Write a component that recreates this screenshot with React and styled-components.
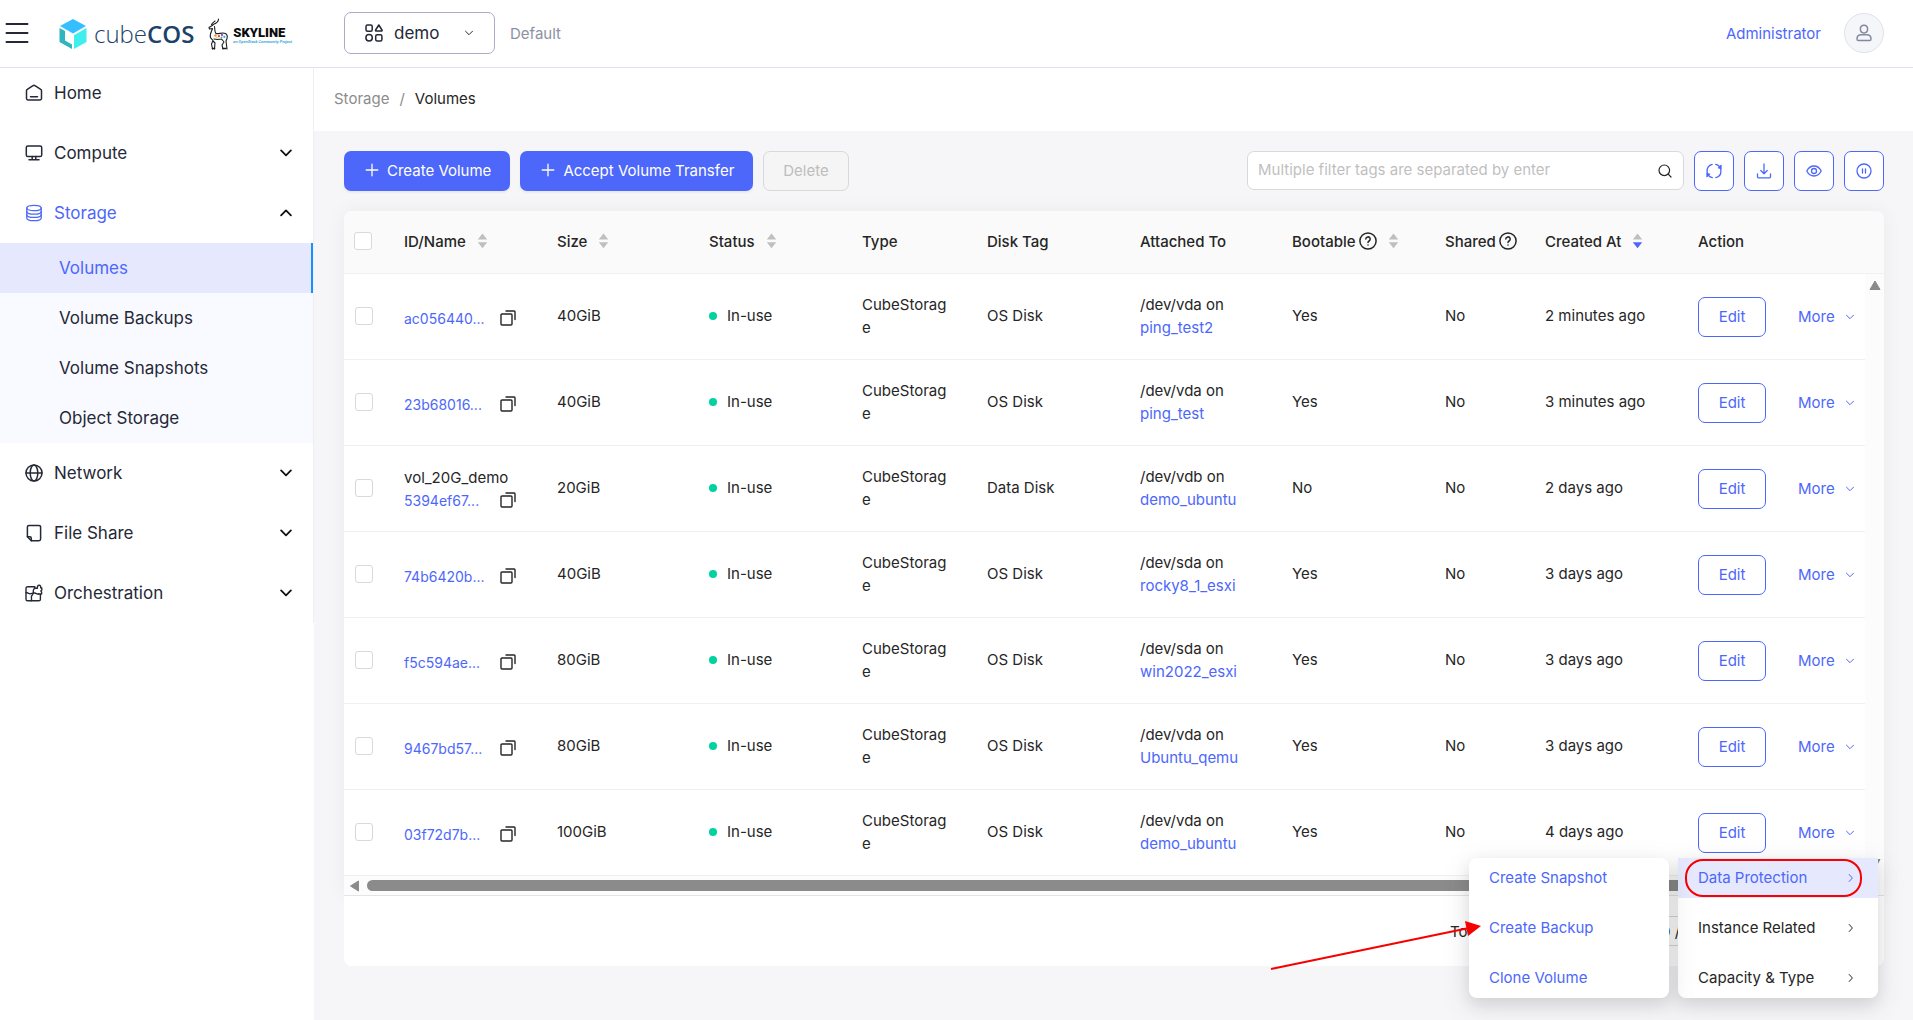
import React from "react";
import styled, { createGlobalStyle, css } from "styled-components";

const color = {
  primary: "#4d67fb",
  text: "#262626",
  nav: "#252836",
  muted: "#8b91a3",
  line: "#f0f0f0",
  headerLine: "#dfe1ed",
  page: "#f6f6f9",
  scroll: "#8b8b8b",
};

const GlobalStyle = createGlobalStyle`
  *, *::before, *::after { box-sizing: border-box; }
  body {
    margin: 0;
    background: #fff;
    color: ${color.text};
    font-family: Inter, "Liberation Sans", sans-serif;
    font-size: 15px;
    line-height: 23px;
  }
  button, input { font: inherit; color: inherit; }
  a { color: ${color.primary}; text-decoration: none; }
`;

/* ---------- shell ---------- */

const Page = styled.div`
  min-height: 100vh;
  display: flex;
  flex-direction: column;
`;

const Header = styled.header`
  height: 68px;
  flex: none;
  display: flex;
  align-items: center;
  padding: 0 29px 1px 5px;
  background: #fff;
  border-bottom: 1px solid ${color.headerLine};
`;

const PlainButton = styled.button`
  display: inline-flex;
  align-items: center;
  justify-content: center;
  padding: 0;
  border: 0;
  background: none;
  cursor: pointer;
`;

const Brand = styled.a`
  width: 285px;
  margin-left: 30px;
  padding-top: 2px;
  display: flex;
  align-items: center;
  color: #1a426a;
`;

const BrandText = styled.span`
  margin: 0 14px 0 7px;
  font-family: "Open Sans", "Noto Sans", sans-serif;
  font-size: 24px;
  line-height: 32px;
  font-weight: 300;
`;

const BrandStrong = styled.strong`
  font-weight: 600;
`;

const Skyline = styled.span`
  display: flex;
  flex-direction: column;
  margin-left: 4px;
  padding-top: 4px;
  font-family: Roboto, sans-serif;
`;

const SkylineName = styled.strong`
  font-size: 13px;
  line-height: 12px;
  font-weight: 900;
  color: #0b0b0d;
`;

const SkylineTag = styled.em`
  font-size: 4px;
  line-height: 6px;
  font-weight: 700;
  color: #3fa9d9;
  white-space: nowrap;
`;

const ProjectButton = styled(PlainButton)`
  width: 151px;
  height: 42px;
  padding: 0 20px;
  justify-content: flex-start;
  gap: 11px;
  border: 1px solid #a9aec6;
  border-radius: 7px;
  color: ${color.nav};
  font-size: 17px;
`;

const Pushed = styled.span`
  margin-left: auto;
  display: inline-flex;
`;

const Domain = styled.span`
  margin-left: 15px;
  color: ${color.muted};
`;

const UserArea = styled.div`
  margin-left: auto;
  display: flex;
  align-items: center;
  gap: 23px;
`;

const Avatar = styled(PlainButton)`
  width: 40px;
  height: 40px;
  border: 1px solid #dfe1ec;
  border-radius: 50%;
  background: #f5f6fa;
  color: #8489a0;
`;

const Body = styled.div`
  flex: 1;
  display: flex;
  align-items: stretch;
`;

const Sidebar = styled.aside`
  width: 314px;
  flex: none;
  background: #fff;
`;

const Nav = styled.nav`
  display: flex;
  flex-direction: column;
  border-right: 1px solid #eeeef3;
`;

const NavItem = styled.button`
  height: 50px;
  margin: 5px 0;
  padding: 0 20px 0 25px;
  display: flex;
  align-items: center;
  gap: 11px;
  border: 0;
  background: none;
  color: ${(p) => (p.$active ? color.primary : color.nav)};
  font-size: 17px;
  cursor: pointer;
  &:first-child { margin-top: 0; }
`;

const NavArrow = styled(Pushed)`
  color: #111;
`;

const SubNav = styled.div`
  display: flex;
  flex-direction: column;
  background: #f9faff;
`;

const SubLink = styled.a`
  height: 50px;
  padding-left: 59px;
  display: flex;
  align-items: center;
  font-size: 17px;
  color: ${color.nav};
  ${(p) =>
    p.$active &&
    css`
      color: ${color.primary};
      background: #e6e9fe;
      border-right: 2px solid #1890ff;
    `}
`;

const Main = styled.main`
  flex: 1;
  min-width: 0;
  background: ${color.page};
`;

const Breadcrumb = styled.nav`
  height: 63px;
  padding: 0 20px 2px;
  display: flex;
  align-items: center;
  gap: 10px;
  background: #fff;
  color: #8c8c8c;
`;

const Crumb = styled.a`
  color: ${(p) => (p.$current ? color.text : "#8c8c8c")};
`;

const Content = styled.div`
  padding: 20px 29px 20px 30px;
`;

/* ---------- toolbar ---------- */

const Toolbar = styled.div`
  display: flex;
  gap: 10px;
  margin-bottom: 20px;
`;

const ActionButton = styled(PlainButton)`
  height: 40px;
  padding: 0 19px 2px;
  gap: 8px;
  border-radius: 7px;
  white-space: nowrap;
  ${(p) =>
    p.$kind === "primary"
      ? css`
          padding: 0 19px 2px 21px;
          background: ${color.primary};
          color: #fff;
          box-shadow: 0 2px 2px rgba(0, 0, 0, 0.05);
        `
      : css`
          border: 1px solid #d9d9d9;
          background: #f5f5f5;
          color: #bdbdbd;
          cursor: not-allowed;
        `}
`;

const SearchBox = styled.label`
  width: 437px;
  height: 39px;
  margin-left: auto;
  padding: 0 11px 0 10px;
  display: flex;
  align-items: center;
  background: #fff;
  border: 1px solid #d9d9d9;
  border-radius: 7px;
`;

const SearchInput = styled.input`
  flex: 1;
  min-width: 0;
  padding: 0 0 2px;
  border: 0;
  outline: 0;
  background: none;
  &::placeholder { color: #bfbfbf; opacity: 1; }
`;

const IconButton = styled(PlainButton)`
  width: 40px;
  height: 40px;
  border: 1px solid ${color.primary};
  border-radius: 7px;
  background: #fff;
  color: ${color.primary};
`;

/* ---------- table ---------- */

const Card = styled.section`
  border-radius: 8px;
  background: #fff;
`;

const TableArea = styled.div`
  border-radius: 8px 8px 0 0;
  box-shadow: 0 0 20px rgba(0, 0, 0, 0.05);
`;

const Table = styled.table`
  width: 100%;
  table-layout: fixed;
  border-collapse: separate;
  border-spacing: 0;
`;

const Col = styled.col`
  width: ${(p) => (p.$w ? `${p.$w}px` : "auto")};
`;

const Th = styled.th`
  height: 63px;
  padding: ${(p) => (p.$check ? "0 10px 2px" : "0 16px 2px")};
  text-align: left;
  font-weight: 500;
  white-space: nowrap;
  background: #fafafa;
  border-bottom: 1px solid ${color.line};
  &:first-child { border-top-left-radius: 8px; }
  &:last-child { border-top-right-radius: 8px; }
`;

const HeadLabel = styled.div`
  display: flex;
  align-items: center;
  gap: ${(p) => (p.$tight ? 3 : 11)}px;
`;

const Td = styled.td`
  height: 86px;
  padding: ${(p) => (p.$check ? "0 11px 2px" : p.$center ? "0 16px" : "0 16px 2px")};
  vertical-align: middle;
  overflow-wrap: anywhere;
  border-bottom: 1px solid ${color.line};
`;

const Gutter = styled.td`
  padding: 6px 4px;
  vertical-align: ${(p) => p.$align};
  line-height: 0;
  color: ${color.scroll};
  background: #fcfcfc;
`;

const Check = styled.input`
  appearance: none;
  display: block;
  width: 18px;
  height: 18px;
  margin: 0;
  border: 1px solid #d9d9d9;
  border-radius: 3px;
  background: #fff;
`;

const IdLine = styled.div`
  display: flex;
  align-items: center;
  justify-content: space-between;
  width: 112px;
  padding-top: ${(p) => (p.$named ? 0 : 3)}px;
  font-size: 14px;
`;

const Status = styled.span`
  display: inline-flex;
  align-items: center;
  gap: 10px;
  vertical-align: top;
  &::before {
    content: "";
    width: 8px;
    height: 8px;
    border-radius: 50%;
    background: #00d39f;
  }
`;

const Attached = styled.div`
  display: flex;
  flex-direction: column;
`;

const Actions = styled.div`
  display: flex;
  align-items: center;
  gap: 32px;
`;

const EditButton = styled(PlainButton)`
  width: 68px;
  height: 40px;
  flex: none;
  border: 1px solid ${color.primary};
  border-radius: 7px;
  background: #fff;
  color: ${color.primary};
`;

const MoreWrap = styled.div`
  position: relative;
  flex: none;
`;

const MoreButton = styled(PlainButton)`
  height: 40px;
  gap: 10px;
  color: ${color.primary};
  white-space: nowrap;
`;

const ScrollTrack = styled.div`
  height: 19px;
  padding: 0 26px 0 5px;
  display: flex;
  align-items: center;
  gap: 6px;
  background: #fcfcfc;
  color: ${color.scroll};
`;

const ScrollThumb = styled.div`
  flex: 1;
  height: 11px;
  border-radius: 6px;
  background: ${color.scroll};
`;

const Pager = styled.footer`
  height: 71px;
  padding: 0 132px 0 0;
  display: flex;
  align-items: center;
  justify-content: flex-end;
  gap: 16px;
  background: #fff;
  border-top: 1px solid #e3e4ea;
  border-radius: 0 0 8px 8px;
`;

const PagerTotal = styled.span`
  min-width: 90px;
`;

const PagerCell = styled(PlainButton)`
  width: 28px;
  height: 30px;
  border-radius: 4px;
  color: #bfbfbf;
`;

const PageSize = styled.select`
  width: 108px;
  height: 30px;
  padding: 0 10px;
  appearance: none;
  border: 1px solid #d9d9d9;
  border-radius: 4px;
  background: #fff;
  color: ${color.text};
  font: inherit;
`;

/* ---------- menus ---------- */

const Menu = styled.div`
  position: absolute;
  z-index: 5;
  width: 200px;
  height: 140px;
  display: flex;
  flex-direction: column;
  gap: 10px;
  background: #fff;
  border-radius: 8px;
  box-shadow: 0 6px 16px rgba(0, 0, 0, 0.1), 0 8px 28px 6px rgba(0, 0, 0, 0.06);
`;

const MainMenu = styled(Menu)`
  top: 45px;
  left: -120px;
`;

const SideMenu = styled(Menu)`
  top: 0;
  right: 209px;
`;

const MenuItem = styled.button`
  height: 40px;
  padding: 0 22px 0 20px;
  display: flex;
  align-items: center;
  justify-content: space-between;
  border: 0;
  background: ${(p) => (p.$active ? "#e6e9fd" : "none")};
  color: ${(p) => (p.$link || p.$active ? color.primary : color.text)};
  white-space: nowrap;
  cursor: pointer;
`;

const Highlight = styled.span`
  position: absolute;
  top: 1px;
  left: 7px;
  width: 177px;
  height: 38px;
  border: 2px solid #f60000;
  border-radius: 18px;
  pointer-events: none;
`;

const Pointer = styled.svg`
  position: absolute;
  top: 60px;
  left: -200px;
  pointer-events: none;
`;

/* ---------- drawings ---------- */

const Svg = ({ size = 18, w = 1.5, box = 18, children }) => (
  <svg
    width={size}
    height={size}
    viewBox={`0 0 ${box} ${box}`}
    fill="none"
    stroke="currentColor"
    strokeWidth={w}
    strokeLinecap="round"
    strokeLinejoin="round"
    aria-hidden="true"
  >
    {children}
  </svg>
);

const Chevron = ({ dir = "down", size = 10, w = 1 }) => {
  const d = {
    down: "M1.5 3.2 5 6.7 8.5 3.2",
    up: "M1.5 6.7 5 3.2 8.5 6.7",
    right: "M3.2 1.5 6.4 5 3.2 8.5",
    left: "M6.4 1.5 3.2 5 6.4 8.5",
  }[dir];
  return (
    <Svg size={size} box={10} w={w}>
      <path d={d} />
    </Svg>
  );
};

const Plus = () => (
  <Svg size={14} box={14} w={1.3}>
    <path d="M7 1.2v11.6M1.2 7h11.6" />
  </Svg>
);

const Triangle = ({ dir }) => {
  const d = {
    up: "M6 1 11 9.5H1z",
    down: "M1 1.5h10L6 10z",
    left: "M1.5 6 9.5 1v10z",
  }[dir];
  return (
    <svg width="12" height="12" viewBox="0 0 12 12" fill="currentColor" stroke="currentColor" strokeLinejoin="round" aria-hidden="true">
      <path d={d} />
    </svg>
  );
};

const Sorter = ({ desc }) => (
  <svg width="11" height="16" viewBox="0 0 11 16" aria-hidden="true">
    <path d="M5.500 0.500 10.200 6.500H.8z" fill="#bfbfbf" />
    <path d="M.8 9.200h9.400L5.500 15.200z" fill={desc ? color.primary : "#bfbfbf"} />
  </svg>
);

const Help = () => (
  <Svg size={18}>
    <circle cx="9" cy="9" r="8.100" />
    <path d="M6.800 7.100a2.200 2.200 0 1 1 3.300 1.900c-.8.5-1.100.8-1.100 1.600" />
    <path d="M9 13v.1" />
  </Svg>
);

const CopyIcon = () => (
  <Svg size={16} box={16} w={1.4}>
    <rect x="1" y="4" width="11" height="11" rx="1" />
    <path d="M6 1h8.200a.8.8 0 0 1 .8.8V9.500" />
  </Svg>
);

const navIcons = {
  home: (
    <Svg>
      <path d="M1.500 6.600c0-.6.3-1 .8-1.300L8 1.700c.6-.4 1.400-.4 2 0l5.700 3.600c.5.3.8.7.8 1.300V14.600c0 .8-.6 1.400-1.400 1.400H2.900c-.8 0-1.400-.6-1.400-1.400z" />
      <path d="M5.500 12.800h7" />
    </Svg>
  ),
  compute: (
    <Svg>
      <rect x="1.300" y="2" width="15.400" height="10.500" rx="1.600" />
      <path d="M7.200 12.500v3M10.800 12.500v3M4 15.800h10" />
    </Svg>
  ),
  storage: (
    <Svg w={1.3}>
      <ellipse cx="9" cy="4" rx="7.200" ry="2.700" />
      <path d="M1.800 4v10c0 1.500 3.200 2.700 7.200 2.700s7.200-1.200 7.200-2.700V4" />
      <path d="M1.800 7.400c0 1.500 3.200 2.700 7.200 2.700s7.200-1.200 7.200-2.700M1.800 10.700c0 1.500 3.200 2.700 7.200 2.700s7.200-1.200 7.200-2.700" />
    </Svg>
  ),
  network: (
    <Svg>
      <circle cx="9" cy="9" r="8" />
      <ellipse cx="9" cy="9" rx="3.800" ry="8" />
      <path d="M1 9h16" />
    </Svg>
  ),
  file: (
    <Svg>
      <path d="M6.300 16.700H14c.9 0 1.600-.7 1.600-1.600V3c0-.9-.7-1.600-1.600-1.600H4C3.100 1.400 2.400 2.100 2.400 3v9.800z" />
      <path d="M2.400 12.800h2.500c.8 0 1.400.6 1.400 1.400v2.500" />
    </Svg>
  ),
  orchestration: (
    <Svg w={1.4}>
      <path d="M9.500 2.800H2.600c-.9 0-1.600.7-1.600 1.600v10.800c0 .9.7 1.600 1.600 1.600h11.200c.9 0 1.600-.7 1.600-1.600V10.500" />
      <path d="M1 8.500c1.800 0 2.500 1.400 4.200 1.300 1.600-.1 2.300-1 4.300-.8 1.800.2 2.600 1.200 4.300 1" />
      <path d="M9.800 2.800c.3 1.600-1.400 2.400-1.500 4 0 1.600.4 2.400-.6 3.600-1 1-1.800 1.600-1.300 3.200.3 1 .2 2.200-.2 3.200" />
      <path d="M9.800 4.200h2.600c-.3-1.600.4-3 1.700-3s2 1.300 1.500 2.700h1.200v2.200c-1 .2-1.200 1.400-.2 1.900v2h-2.800" />
    </Svg>
  ),
};

const ProjectIcon = () => (
  <Svg size={18}>
    <rect x="1" y="1" width="6.200" height="6.200" rx="1.500" />
    <path d="M13.800 1 17 6c.2.600-.1 1.100-.7 1.100h-5c-.6 0-.9-.5-.7-1.100z" />
    <circle cx="4.100" cy="13.800" r="3.200" />
    <rect x="10.700" y="10.700" width="6.200" height="6.200" rx="1.500" />
  </Svg>
);

const CubeLogo = () => (
  <svg width="28" height="32" viewBox="0 0 28 32" aria-hidden="true">
    <path d="M14 1 27 8 14 15.500 1 8z" fill="#35bfff" />
    <path d="M.5 10 6 13v9.500l7 4V31L.5 24z" fill="#2fb5bd" />
    <path d="M27.500 10v14L15 31V17.200z" fill="#40eeee" />
  </svg>
);

const DeerLogo = () => (
  <svg width="21" height="32" viewBox="0 0 21 32" fill="none" stroke="#1d1d1f" strokeWidth="1.100" strokeLinecap="round" strokeLinejoin="round" aria-hidden="true">
    <path d="M5 6.500C8 5.500 10.500 4 10.500 1M3.500 6.500C4.500 4.500 6.500 3.800 7 3" />
    <path d="M5 7 1 9.500l.5 1.500 3-.5c-.8 3-3.200 6-2 9 .6 1.600 2 2 2.500 3L3.500 26l1 5M5 23l2 2-.5 6M6.500 8.500c.5 3 0 5.500 1.500 7 3 .8 6-1.500 9.500 0 1.500.8 2 3 1.500 5l-1 2.500 1 8M13.500 21l2.500 3-2 3 1 4M6 21c2.500.8 5 .5 7.500 0" />
    <path d="M4.500 30.500h2M15 30.500h3" strokeWidth="1.600" />
    <g stroke="none">
      <circle cx="7.500" cy="17.500" r="1.200" fill="#f28a2e" />
      <circle cx="11" cy="18.200" r="1.100" fill="#e23b4b" />
      <circle cx="14" cy="16.900" r="1.100" fill="#8a3fd1" />
      <circle cx="16.300" cy="18.800" r="1.100" fill="#29a6e0" />
      <circle cx="9" cy="19.600" r=".9" fill="#f6cf33" />
      <circle cx="13.500" cy="19.500" r=".9" fill="#3bbf6a" />
    </g>
  </svg>
);

/* ---------- data ---------- */

const nav = [
  { label: "Home", icon: "home" },
  { label: "Compute", icon: "compute", arrow: "down" },
  {
    label: "Storage",
    icon: "storage",
    arrow: "up",
    children: ["Volumes", "Volume Backups", "Volume Snapshots", "Object Storage"],
  },
  { label: "Network", icon: "network", arrow: "down" },
  { label: "File Share", icon: "file", arrow: "down" },
  { label: "Orchestration", icon: "orchestration", arrow: "down" },
];

const columns = [
  { label: "ID/Name", w: 153, sort: true },
  { label: "Size", w: 152, sort: true },
  { label: "Status", w: 153, sort: true },
  { label: "Type", w: 125 },
  { label: "Disk Tag", w: 153 },
  { label: "Attached To", w: 152 },
  { label: "Bootable", w: 153, help: true, sort: true },
  { label: "Shared", w: 100, help: true },
  { label: "Created At", w: 153, sort: true, desc: true },
  { label: "Action" },
];

const rows = [
  { id: "ac056440...", size: "40GiB", tag: "OS Disk", dev: "/dev/vda", host: "ping_test2", boot: "Yes", at: "2 minutes ago" },
  { id: "23b68016...", size: "40GiB", tag: "OS Disk", dev: "/dev/vda", host: "ping_test", boot: "Yes", at: "3 minutes ago" },
  { id: "5394ef67...", name: "vol_20G_demo", size: "20GiB", tag: "Data Disk", dev: "/dev/vdb", host: "demo_ubuntu", boot: "No", at: "2 days ago" },
  { id: "74b6420b...", size: "40GiB", tag: "OS Disk", dev: "/dev/sda", host: "rocky8_1_esxi", boot: "Yes", at: "3 days ago" },
  { id: "f5c594ae...", size: "80GiB", tag: "OS Disk", dev: "/dev/sda", host: "win2022_esxi", boot: "Yes", at: "3 days ago" },
  { id: "9467bd57...", size: "80GiB", tag: "OS Disk", dev: "/dev/vda", host: "Ubuntu_qemu", boot: "Yes", at: "3 days ago" },
  { id: "03f72d7b...", size: "100GiB", tag: "OS Disk", dev: "/dev/vda", host: "demo_ubuntu", boot: "Yes", at: "4 days ago" },
];

/* ---------- parts ---------- */

const RowMenu = () => (
  <MainMenu>
    <MenuItem $active>
      Data Protection
      <Chevron dir="right" />
    </MenuItem>
    <MenuItem>
      Instance Related
      <Chevron dir="right" />
    </MenuItem>
    <MenuItem>
      Capacity &amp; Type
      <Chevron dir="right" />
    </MenuItem>
    <Highlight />
    <SideMenu>
      <MenuItem $link>Create Snapshot</MenuItem>
      <MenuItem $link>Create Backup</MenuItem>
      <MenuItem $link>Clone Volume</MenuItem>
      <Pointer width="214" height="56" viewBox="0 0 214 56" aria-hidden="true">
        <path d="M2 51 200 10" stroke="#f60000" strokeWidth="2" />
        <path d="M196 3 212 8 199 18z" fill="#f60000" />
      </Pointer>
    </SideMenu>
  </MainMenu>
);

const VolumeTable = () => (
  <Table>
    <colgroup>
      <Col $w={44} />
      {columns.map((c) => (
        <Col key={c.label} $w={c.w} />
      ))}
      <Col $w={19} />
    </colgroup>
    <thead>
      <tr>
        <Th $check>
          <Check type="checkbox" aria-label="Select all" />
        </Th>
        {columns.map((c) => (
          <Th key={c.label} colSpan={c.label === "Action" ? 2 : 1}>
            <HeadLabel>
              <HeadLabel $tight>
                {c.label}
                {c.help && <Help />}
              </HeadLabel>
              {c.sort && <Sorter desc={c.desc} />}
            </HeadLabel>
          </Th>
        ))}
      </tr>
    </thead>
    <tbody>
      {rows.map((r, i) => (
        <tr key={r.id}>
          <Td $check>
            <Check type="checkbox" aria-label={`Select ${r.id}`} />
          </Td>
          <Td $center>
            {r.name}
            <IdLine $named={!!r.name}>
              <a href="#volume">{r.id}</a>
              <CopyIcon />
            </IdLine>
          </Td>
          <Td>{r.size}</Td>
          <Td>
            <Status>In-use</Status>
          </Td>
          <Td>CubeStorage</Td>
          <Td>{r.tag}</Td>
          <Td>
            <Attached>
              {r.dev} on
              <a href="#instance">{r.host}</a>
            </Attached>
          </Td>
          <Td>{r.boot}</Td>
          <Td>No</Td>
          <Td>{r.at}</Td>
          <Td $center>
            <Actions>
              <EditButton>Edit</EditButton>
              <MoreWrap>
                <MoreButton>
                  More
                  <Chevron />
                </MoreButton>
                {i === rows.length - 1 && <RowMenu />}
              </MoreWrap>
            </Actions>
          </Td>
          {i === 0 && (
            <Gutter rowSpan={rows.length - 1} $align="top">
              <Triangle dir="up" />
            </Gutter>
          )}
          {i === rows.length - 1 && (
            <Gutter $align="bottom">
              <Triangle dir="down" />
            </Gutter>
          )}
        </tr>
      ))}
    </tbody>
  </Table>
);

export default function App() {
  return (
    <Page>
      <GlobalStyle />
      <Header>
        <PlainButton aria-label="Toggle menu">
          <svg width="24" height="22" viewBox="0 0 24 22" stroke={color.nav} strokeWidth="2" strokeLinecap="round" aria-hidden="true">
            <path d="M1.500 2h21M1.500 11h21M1.500 20h21" />
          </svg>
        </PlainButton>
        <Brand href="#home">
          <CubeLogo />
          <BrandText>
            cube<BrandStrong>COS</BrandStrong>
          </BrandText>
          <DeerLogo />
          <Skyline>
            <SkylineName>SKYLINE</SkylineName>
            <SkylineTag>an OpenStack Community Project</SkylineTag>
          </Skyline>
        </Brand>
        <ProjectButton>
          <ProjectIcon />
          demo
          <Pushed>
            <Chevron />
          </Pushed>
        </ProjectButton>
        <Domain>Default</Domain>
        <UserArea>
          <a href="#user">Administrator</a>
          <Avatar aria-label="Account">
            <Svg size={18}>
              <path d="M9 1.200c2.300 0 3.600 1.600 3.600 3.900S11.200 9 9 9 5.400 7.400 5.400 5.100 6.700 1.200 9 1.200z" />
              <path d="M6.300 10.800h5.400c2.600 0 4.300 1.500 4.300 4.200 0 1-.5 1.600-1.400 1.600H3.400c-.9 0-1.400-.6-1.400-1.600 0-2.700 1.700-4.200 4.300-4.200z" />
            </Svg>
          </Avatar>
        </UserArea>
      </Header>
      <Body>
        <Sidebar>
          <Nav>
            {nav.map((n) => (
              <React.Fragment key={n.label}>
                <NavItem $active={!!n.children}>
                  {navIcons[n.icon]}
                  {n.label}
                  {n.arrow && (
                    <NavArrow>
                      <Chevron dir={n.arrow} size={14} w={1.3} />
                    </NavArrow>
                  )}
                </NavItem>
                {n.children && (
                  <SubNav>
                    {n.children.map((c, i) => (
                      <SubLink key={c} href="#nav" $active={i === 0}>
                        {c}
                      </SubLink>
                    ))}
                  </SubNav>
                )}
              </React.Fragment>
            ))}
          </Nav>
        </Sidebar>
        <Main>
          <Breadcrumb aria-label="Breadcrumb">
            <Crumb href="#storage">Storage</Crumb>
            <span>/</span>
            <Crumb href="#volumes" $current>
              Volumes
            </Crumb>
          </Breadcrumb>
          <Content>
            <Toolbar>
              <ActionButton $kind="primary">
                <Plus />
                Create Volume
              </ActionButton>
              <ActionButton $kind="primary">
                <Plus />
                Accept Volume Transfer
              </ActionButton>
              <ActionButton disabled>Delete</ActionButton>
              <SearchBox>
                <SearchInput type="text" aria-label="Filter volumes" placeholder="Multiple filter tags are separated by enter" />
                <Svg size={14} box={14} w={1.2}>
                  <circle cx="6.300" cy="6.300" r="5.300" />
                  <path d="M10.200 10.200 13 13" />
                </Svg>
              </SearchBox>
              <IconButton aria-label="Refresh">
                <Svg size={16} box={16} w={1.3}>
                  <path d="M6.200 1.300A6.900 6.900 0 0 0 1.100 8.300c0 1 .2 1.900.6 2.700M2.500 12.500a6.900 6.900 0 0 0 3.800 2.200" />
                  <path d="M9.800 14.700a6.900 6.900 0 0 0 5.100-7c0-1-.2-1.900-.6-2.700M13.500 3.500A6.900 6.900 0 0 0 9.700 1.300" />
                  <path d="M12.200 4.600 15.200 2v3.600zM3.800 11.400.8 14v-3.600z" fill="currentColor" strokeWidth="0.800" />
                </Svg>
              </IconButton>
              <IconButton aria-label="Download">
                <Svg size={16} box={16} w={1.3}>
                  <path d="M8 1v9.500M4.800 7.500 8 10.700l3.200-3.200M1.500 11v2.700c0 .7.500 1.100 1.100 1.100h10.800c.6 0 1.100-.4 1.100-1.100V11" />
                </Svg>
              </IconButton>
              <IconButton aria-label="Columns">
                <Svg size={16} box={16} w={1.3}>
                  <path d="M.8 8C2.500 4.700 5 3 8 3s5.500 1.700 7.200 5C13.500 11.300 11 13 8 13S2.500 11.300.8 8z" />
                  <circle cx="8" cy="8" r="2.500" />
                </Svg>
              </IconButton>
              <IconButton aria-label="Pause refresh">
                <Svg size={16} box={16} w={1.3}>
                  <circle cx="8" cy="8" r="7" />
                  <path d="M6.500 6v4M9.500 6v4" />
                </Svg>
              </IconButton>
            </Toolbar>
            <Card>
              <TableArea>
                <VolumeTable />
                <ScrollTrack>
                  <Triangle dir="left" />
                  <ScrollThumb />
                </ScrollTrack>
              </TableArea>
              <Pager>
                <PagerTotal>Total</PagerTotal>
                <PagerCell aria-label="Previous page">
                  <Chevron dir="left" />
                </PagerCell>
                <PagerCell aria-label="Next page">
                  <Chevron dir="right" />
                </PagerCell>
                <PageSize aria-label="Page size" defaultValue="10">
                  <option value="10">10 / page</option>
                </PageSize>
              </Pager>
            </Card>
          </Content>
        </Main>
      </Body>
    </Page>
  );
}
